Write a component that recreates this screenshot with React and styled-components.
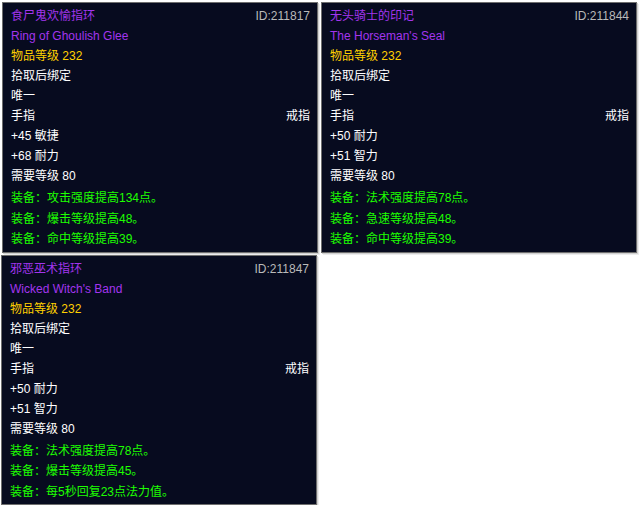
import React from "react";
import styled, { createGlobalStyle } from "styled-components";

const GlobalStyle = createGlobalStyle`
  html, body {
    margin: 0;
    padding: 0;
    background: #ffffff;
  }
  body {
    font-family: "Liberation Sans", "Noto Sans CJK SC", Arial, sans-serif;
  }
`;

const Board = styled.div`
  display: grid;
  grid-template-columns: 316px 316px;
  column-gap: 3px;
  row-gap: 2px;
  padding: 2px 0 0 2px;
  align-items: start;
`;

const Card = styled.div`
  box-sizing: border-box;
  width: 316px;
  background: #070b1f;
  border: 1px solid #6e6e6e;
  box-shadow: 1px 1px 0 #d0d0d0, 2px 2px 0 #ececec;
  padding: 3px 7px 2px 8px;
  font-size: 12px;
  line-height: 20px;
  color: #ffffff;
  margin-left: ${(p) => p.shift || 0}px;
`;

const Row = styled.div`
  display: flex;
  justify-content: space-between;
  white-space: nowrap;
`;

const Line = styled.div`
  color: ${(p) => p.color || "#ffffff"};
  white-space: nowrap;
`;

const Title = styled.span`
  color: #a335ee;
`;

const ItemId = styled.span`
  color: #bababa;
`;

const Effects = styled.div`
  margin-top: 2px;
  color: #1eff00;
  line-height: 20.5px;
`;

const items = [
  {
    id: "211817",
    cn: "食尸鬼欢愉指环",
    en: "Ring of Ghoulish Glee",
    stats: ["+45 敏捷", "+68 耐力"],
    effects: ["装备：攻击强度提高134点。", "装备：爆击等级提高48。", "装备：命中等级提高39。"],
  },
  {
    id: "211844",
    cn: "无头骑士的印记",
    en: "The Horseman's Seal",
    stats: ["+50 耐力", "+51 智力"],
    effects: ["装备：法术强度提高78点。", "装备：急速等级提高48。", "装备：命中等级提高39。"],
  },
  {
    id: "211847",
    cn: "邪恶巫术指环",
    en: "Wicked Witch's Band",
    stats: ["+50 耐力", "+51 智力"],
    effects: ["装备：法术强度提高78点。", "装备：爆击等级提高45。", "装备：每5秒回复23点法力值。"],
    shift: -1,
  },
];

const Tooltip = ({ item }) => (
  <Card shift={item.shift}>
    <Row>
      <Title>{item.cn}</Title>
      <ItemId>ID:{item.id}</ItemId>
    </Row>
    <Line color="#a335ee">{item.en}</Line>
    <Line color="#ffd100">物品等级 232</Line>
    <Line>拾取后绑定</Line>
    <Line>唯一</Line>
    <Row>
      <span>手指</span>
      <span>戒指</span>
    </Row>
    {item.stats.map((s) => (
      <Line key={s}>{s}</Line>
    ))}
    <Line>需要等级 80</Line>
    <Effects>
      {item.effects.map((e) => (
        <div key={e}>{e}</div>
      ))}
    </Effects>
  </Card>
);

export default function App() {
  return (
    <>
      <GlobalStyle />
      <Board>
        {items.map((it) => (
          <Tooltip key={it.id} item={it} />
        ))}
      </Board>
    </>
  );
}
